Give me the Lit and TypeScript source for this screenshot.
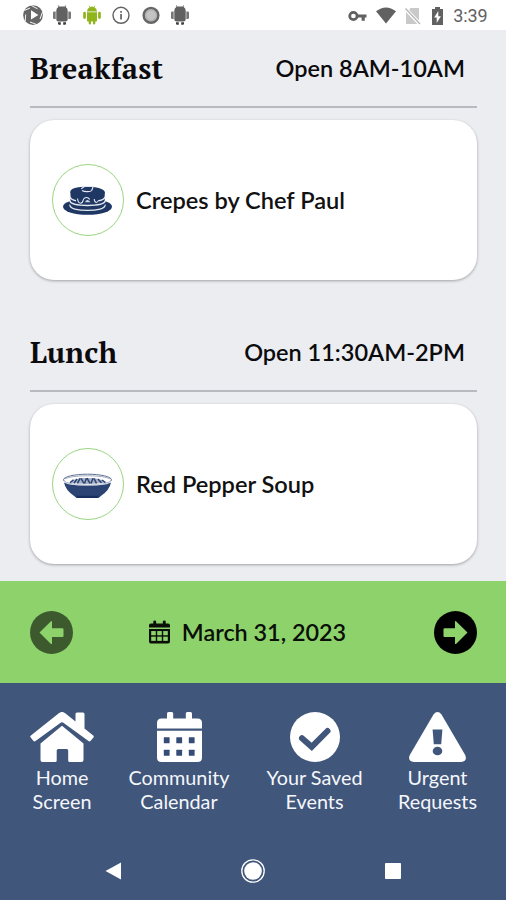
import { LitElement, html, css, svg } from "lit";
import { customElement, property } from "lit/decorators.js";

const droid = html`<svg class="green" viewBox="0 0 20 20" width="20" height="20">
  <path fill="currentColor" d="M5 7.2h10v8.3q0 1-1 1H6q-1 0-1-1zM5 6.6Q5 3.4 7.6 2.2L6.800.8l.5-.3.9 1.4q1.800-.6 3.600 0l.9-1.4.5.3-.8 1.4Q15 3.400 15 6.600zM1.200 8q0-1.200 1.300-1.200T3.900 8v4.600q0 1.300-1.400 1.300t-1.300-1.300zM16.100 8q0-1.200 1.400-1.200t1.300 1.200v4.600q0 1.300-1.300 1.300t-1.400-1.300zM6.700 16h2.300v2.600q0 1-1.100 1t-1.200-1zM11 16h2.300v2.600q0 1-1.100 1t-1.200-1z"/></svg>`;

const solidDroid = html`<svg viewBox="0 0 20 20" width="20" height="20">
  <path fill="currentColor" d="M4.300 5.500Q4.300 3.400 6.500 1.800L5.800.6l.6-.3.900 1.100h5.400l.9-1.100.6.300-.7 1.200q2.200 1.600 2.200 3.700v8.500q0 2.500-2.500 2.500H6.800q-2.500 0-2.500-2.500z"/>
  <path fill="#777" d="M1 7.500q0-1 1.300-1h1.400V14H2.300Q1 14 1 12.800zM19 7.500q0-1-1.300-1h-1.400V14h1.400q1.300 0 1.300-1.200z"/>
  <path fill="#3c3c3c" d="M6 17.300h2.800v2.400H7q-1 0-1-1zM11.200 17.300H14v1.400q0 1-1 1h-1.800z"/></svg>`;

const pancakes = svg`
  <path d="M0 20.500q0-3 7.500-5.400h34q7.500 2.400 7.500 5.400 0 3.700-7 6-7 2.300-17.500 2.300T7 26.500q-7-2.300-7-6z" fill="#1f3763"/>
  <path d="M6.800 18.500q0 3.200 5 4.600 5 1.300 12.700 1.300t12.700-1.300q5-1.400 5-4.600" fill="none" stroke="#e4e8f0" stroke-width="1.300"/>
  <path d="M7.500 6v12.500q1 4 17 4t17.200-4V6z" fill="#1f3763"/>
  <path d="M6.900 10.800q1 3 6.100 4M42.200 10.800q-1 3-6.200 4M6.900 15q1.500 4.400 17.600 4.400T42.200 15" fill="none" stroke="#e4e8f0" stroke-width="1.500"/>
  <path d="M7.300 5.500q0-2.700 8-4.200 12.200-2 20.500.7 6 1.800 6 4.200 0 3-4.600 4.600-1.700.8-2.400 2.700-.6 2.200-1.900 2.200t-1.500-2q-.2-1.800-2.400-1.800-1.300.2-2 1-2.600-2.700-5.600-.8-1.500 1-2 3.500-.3 2-2 2t-2-2.500q-.3-3.300-2.600-3.600-5.500-1.800-5.500-6z" fill="#1f3763"/>
  <path d="M14.500 12.500q.6 4.700 3 4.700 2 0 2.500-2.600.6-2.200 2.100-2.800 2.800-1 4.600 1.600M31.200 13q.4 3.500 2.200 3.500 1.600 0 2.100-2.500" fill="none" stroke="#e4e8f0" stroke-width="1.100"/>
  <path d="M22 16.200q1-2.500 2.600-2.200t3 2.300z" fill="#cdd4e1"/>
  <path d="M18.200 2.700 21.500.5h8.700l-1.500 4q-1 1.300-4.500 1.200T19 4.500" fill="#1f3763" stroke="#e4e8f0" stroke-width="1.200"/>`;

const bowl = svg`
  <path d="M1 12.500Q25 18 48 12.500 46.500 20 38.500 25.500L35.500 28h-22l-3-2.500Q2.500 20 1 12.500z" fill="#2b4473"/>
  <path d="M13 25.800h23L34 27.900H15z" fill="#18305f"/>
  <ellipse cx="24.500" cy="9.800" rx="24" ry="5.600" fill="#fff" stroke="#4c5c84" stroke-width=".9"/>
  <path d="M2 8.800Q8 5.800 24.500 5.800T47 8.800" fill="none" stroke="#8d98b3" stroke-width=".8"/>
  <path d="M6.500 12.300Q9 9.500 14 9l3.500-1h14l3.500 1q5 .5 7.500 3.300Q36 14 24.500 14T6.500 12.300z" fill="#a5afc6"/>
  <path d="M7 12.800l3.500-3M11 13.200l3-4.200M14.500 13.400l2.500-5M18 8.300l3 5.200M21.500 13.400l2-5.200M24 8.200l3 5.200M28 13.400l2-5.200M31 8.500l2.500 4.800M35 9l3.500 4M39 10l3.500 2.600" stroke="#2b4473" stroke-width="1.500"/>
  <path d="M1 11.300q3 3.700 23.500 3.700T48 11.300" fill="none" stroke="#d8dde7" stroke-width="1.100"/>`;

@customElement("status-bar")
class StatusBar extends LitElement {
  static styles = css`
    :host { display: flex; justify-content: space-between; height: 30px; background: #fff; color: #616161; box-sizing: border-box; padding: 5px 18.500px 0 22.500px; }
    .left { display: flex; gap: 9.500px; }
    .right { display: flex; height: 21px; align-items: center; }
    .green { color: #8fb41c; }
    .key { margin-right: 9.500px; } .wifi { margin-right: 9px; } .sim { margin-right: 11px; } .bat { margin-right: 10px; }
    svg { display: block; flex: none; }
    .time { font: 18px/21px Roboto, sans-serif; letter-spacing: -.1px; }
  `;
  render() {
    return html`
      <div class="left">
        <svg width="20" height="20" viewBox="0 0 20 20"><circle cx="10" cy="10.100" r="9.900" fill="#666"/><path d="M8 5.300v9.200l7.400-4.600z" fill="#fff"/><path d="M8.300.5 14.500 3.800M19.300 7.500 17 14M13.700 19.500 7 17M2.200 16 2.700 9.500M1.300 5.500 7 3" stroke="#f4f4f4" stroke-width="1" fill="none"/></svg>
        ${solidDroid}${droid}
        <svg width="20" height="20" viewBox="0 0 20 20"><circle cx="10" cy="10.300" r="8" fill="none" stroke="currentColor" stroke-width="1.400"/><path d="M9.200 9h1.700v5.500H9.200zM9.200 6h1.700v1.700H9.200z" fill="currentColor"/></svg>
        <svg width="20" height="20" viewBox="0 0 20 20"><circle cx="10" cy="10.300" r="7.400" fill="#b5b5b5" stroke="#666" stroke-width="2.400"/><circle cx="10" cy="10.300" r="4.500" fill="#c4c4c4"/></svg>
        ${solidDroid}
      </div>
      <div class="right">
        <svg class="key" width="19" height="12" viewBox="0 0 19 12"><circle cx="5.400" cy="6" r="3.700" fill="none" stroke="currentColor" stroke-width="2.700"/><path d="M9 4.600h9.500v3h-1.700v3.100h-3.200V7.600H9z" fill="currentColor"/></svg>
        <svg class="wifi" width="20" height="17" viewBox="0 0 21 17"><path d="M0 4Q10.500-4 21 4L10.500 17z" fill="currentColor"/></svg>
        <svg class="sim" width="16" height="18" viewBox="0 0 16 18"><path d="M5.500 1H14v12.500L4 3zM1 5l11.300 12H1z" fill="#c9c9c9"/><path d="M.5 1.500 15 17" stroke="#b5b5b5" stroke-width="1.300"/></svg>
        <svg class="bat" width="11" height="18" viewBox="0 0 11 18"><path d="M0 2h3V0h5v2h3v16H0z" fill="currentColor"/><path d="M6.300 4 2.200 10.400h2.500V16l4.200-6.800H6.300z" fill="#fff"/></svg>
        <span class="time">3:39</span>
      </div>`;
  }
}

@customElement("meal-section")
class MealSection extends LitElement {
  @property() name = "";
  @property() hours = "";
  @property() dish = "";
  @property({ attribute: false }) art: unknown;
  static styles = css`
    :host { display: block; height: 284px; padding: 0 29px 0 30px; box-sizing: border-box; }
    .head { height: 77.500px; display: flex; justify-content: space-between; align-items: center; border-bottom: 2px solid #b8bac0; box-sizing: border-box; padding-right: 12px; }
    h2 { margin: 1px 0 0; font: bold 29px/40px "PT Serif", "Liberation Serif", serif; letter-spacing: .2px; color: #0b0b0d; }
    .hours { font: 600 23.500px/30px Lato, sans-serif; color: #0b0b0d; }
    .card { margin-top: 12.500px; height: 160px; border-radius: 24px; background: #fff; box-shadow: 0 1px 3px rgba(0,0,0,.32); display: flex; align-items: center; box-sizing: border-box; padding-left: 21.500px; }
    .ring { width: 72px; height: 72px; box-sizing: border-box; border: 1.400px solid #9bd580; border-radius: 50%; display: flex; align-items: center; justify-content: center; }
    .dish { margin: 0 0 1px 12.500px; font: 600 23.600px/30px Lato, sans-serif; color: #111; }
  `;
  render() {
    return html`<div class="head"><h2>${this.name}</h2><span class="hours">${this.hours}</span></div>
      <div class="card">
        <div class="ring"><svg width="49" height="29" viewBox="0 0 49 29">${this.art}</svg></div>
        <span class="dish">${this.dish}</span>
      </div>`;
  }
}

@customElement("date-bar")
class DateBar extends LitElement {
  static styles = css`
    :host { display: flex; height: 102px; background: #8ed26c; align-items: center; justify-content: space-between; padding: 0 29px 0 30px; box-sizing: border-box; }
    svg { display: block; }
    .off { opacity: .57; }
    .date { display: flex; align-items: center; gap: 12px; margin-right: 12px; font: 600 23.400px/30px Lato, sans-serif; color: #0a0f08; }
    .date span { margin-bottom: 1px; }
  `;
  render() {
    const arrow = svg`<circle cx="21.500" cy="21.500" r="21.500" fill="#000"/><path d="M33.500 21.500 22 10.300q-1-.6-1 .5v6.400H10.500q-1 0-1 1v6.800q0 1 1 1H21v6.400q0 1.100 1 .5z" fill="#8ed26c"/>`;
    const cells = [0, 1, 2].flatMap((c) => [0, 1].map((r) => svg`<rect x=${2.3 + c * 6.300} y=${11 + r * 5.9} width="4.800" height="4.400" fill="#8ed26c"/>`));
    return html`
      <svg class="off" width="43" height="43" viewBox="0 0 43 43"><g transform="translate(43 0) scale(-1 1)">${arrow}</g></svg>
      <div class="date">
        <svg width="21" height="24" viewBox="0 0 22 24"><path d="M0 7.300V5q0-2 2-2h2.500V1q0-1 1.500-1t1.500 1v2h7V1q0-1 1.500-1t1.500 1v2H20q2 0 2 2v2.300zM0 8.800h22V22q0 2-2 2H2q-2 0-2-2z" fill="#0a0f08"/>${cells}</svg>
        <span>March 31, 2023</span>
      </div>
      <svg width="43" height="43" viewBox="0 0 43 43">${arrow}</svg>`;
  }
}

@customElement("tab-bar")
class TabBar extends LitElement {
  static styles = css`
    :host { display: block; height: 217px; background: #41567b; }
    .tabs { display: grid; grid-template-columns: 124px 110px 161px 85px; height: 158px; padding-top: 29px; box-sizing: border-box; }
    .tab { display: flex; flex-direction: column; align-items: center; text-align: center; color: #f5f7fb; font: 19.800px/23.500px Lato, sans-serif; white-space: pre-line; }
    .tab svg { display: block; margin-bottom: 4px; flex: none; }
    .sys { display: flex; height: 59px; box-sizing: border-box; padding: 0 104px; justify-content: space-between; }
    .sys svg { display: block; margin-top: 18px; }
  `;
  render() {
    const dots = [0, 1, 2].flatMap((c) => [0, 1].map((r) => svg`<rect x=${6.8 + c * 12.5} y=${25.3 + r * 12.500} width="5.800" height="6" rx=".5" fill="#344c76"/>`));
    return html`
      <div class="tabs">
        <div class="tab"><svg width="64" height="50" viewBox="0 0 64 50" fill="#fff">
          <path d="M.7 25.500Q-.3 24.400.9 23.400L28.800 1.200Q32-1.300 35.200 1.200L45.500 9.500V2q0-1.500 1.500-1.500h6q1.500 0 1.500 1.500v14.600l8.700 6.900q1.100 1 .2 2.100l-2.700 3.200q-1 1.200-2.200.2L33 10.600q-1-.8-2 0L5.500 29q-1.200 1-2.200-.2z"/>
          <path d="M32 13.800 53.500 31.500V48q0 2-2 2H39.700q-1.500 0-1.500-1.500V38.500q0-1.500-1.500-1.500h-8.500q-1.500 0-1.500 1.500v10q0 1.500-1.500 1.500H12.500q-2 0-2-2V31.500z"/></svg>Home
Screen</div>
        <div class="tab"><svg width="45" height="50" viewBox="0 0 45 50"><path d="M0 16.500V11q0-4.500 4.500-4.500H10V1.500Q10 0 11.500 0h3.200q1.500 0 1.500 1.500v5h12.600v-5q0-1.500 1.500-1.500h3.200Q35 0 35 1.500v5h5.500Q45 6.500 45 11v5.500zM0 18.700h45v26.800q0 4.500-4.500 4.500h-36Q0 50 0 45.500z" fill="#fff"/>${dots}</svg>Community
Calendar</div>
        <div class="tab"><svg width="50" height="50" viewBox="0 0 50 50"><circle cx="25" cy="25" r="25" fill="#fff"/><path d="M12 26.300 21.700 34.800 37.500 19" fill="none" stroke="#41567b" stroke-width="6" stroke-linecap="round"/></svg>Your Saved
Events</div>
        <div class="tab"><svg width="57" height="50" viewBox="0 0 57 50"><path d="M24.500 2.400q4-4.800 8 0L56.200 43q2.500 6-4 7H4.800q-6.500-1-4-7z" fill="#fff"/><path d="M23.600 17.500h9.800l-1.200 14.700h-7.400z" fill="#41567b"/><ellipse cx="28.500" cy="39" rx="4.800" ry="4.300" fill="#41567b"/></svg>Urgent
Requests</div>
      </div>
      <div class="sys">
        <svg width="18" height="24" viewBox="0 0 18 24"><path d="M1.500 12 17 3.500v17z" fill="#fff"/></svg>
        <svg width="24" height="24" viewBox="0 0 24 24"><circle cx="12" cy="12" r="11.200" fill="none" stroke="#fff" stroke-width="1.300"/><circle cx="12" cy="12" r="8.800" fill="#fff"/></svg>
        <svg width="18" height="24" viewBox="0 0 18 24"><rect x="1" y="4" width="16" height="16" rx=".8" fill="#fff"/></svg>
      </div>`;
  }
}

@customElement("app-root")
class AppRoot extends LitElement {
  static styles = css`
    :host { display: flex; flex-direction: column; width: 506px; height: 900px; background: #ebedf1; overflow: hidden; }
    .meals { height: 551px; overflow: hidden; flex: none; }
  `;
  render() {
    return html`<status-bar></status-bar>
      <div class="meals">
        <meal-section name="Breakfast" hours="Open 8AM-10AM" dish="Crepes by Chef Paul" .art=${pancakes}></meal-section>
        <meal-section name="Lunch" hours="Open 11:30AM-2PM" dish="Red Pepper Soup" .art=${bowl}></meal-section>
      </div>
      <date-bar></date-bar>
      <tab-bar></tab-bar>`;
  }
}
